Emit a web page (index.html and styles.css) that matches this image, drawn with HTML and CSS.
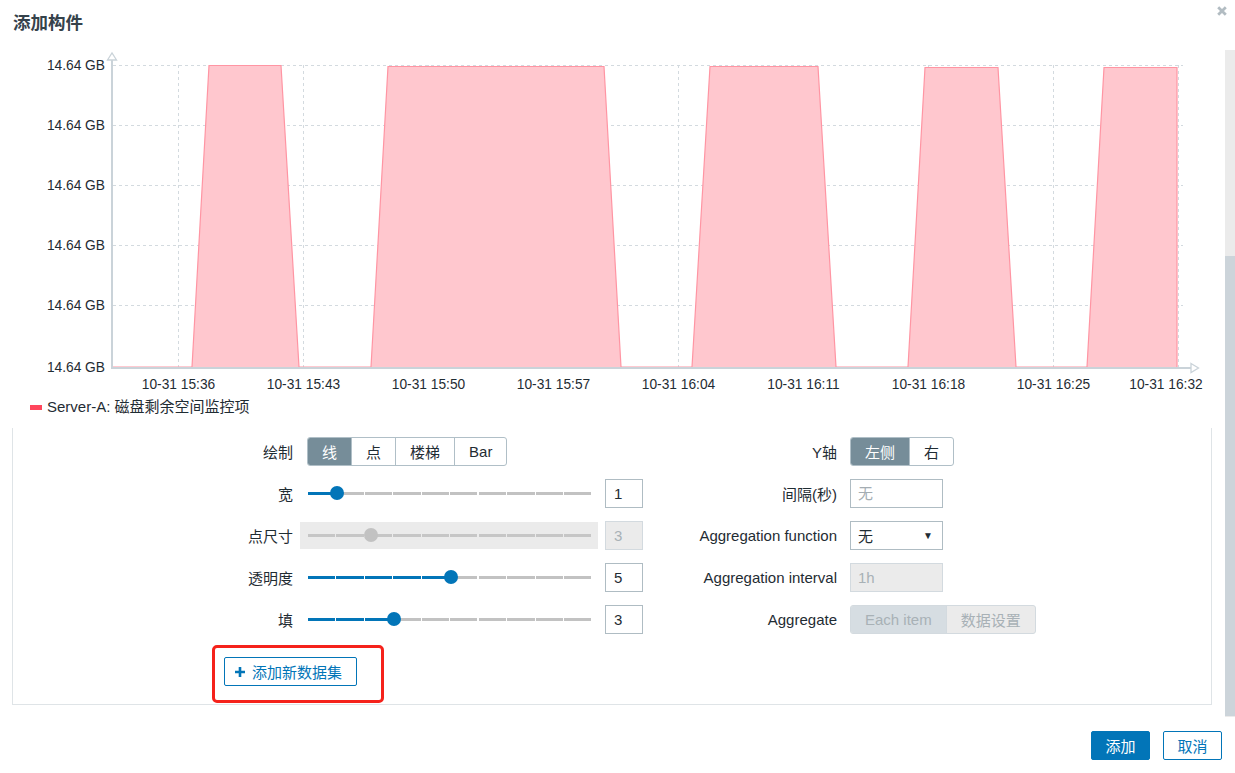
FILE: index.html
```html
<!DOCTYPE html>
<html lang="zh">
<head>
<meta charset="utf-8">
<title>添加构件</title>
<link rel="stylesheet" href="styles.css">
</head>
<body>
<div class="dialog">
  <header class="dlg-head">
    <h1 class="dlg-title">添加构件</h1>
    <button class="dlg-close" aria-label="关闭">
      <svg width="10" height="10" viewBox="0 0 10 10"><path d="M1.2 1.2 L8.8 8.8 M8.8 1.2 L1.2 8.8" stroke="#b2bcc2" stroke-width="2.8" stroke-linecap="butt"/></svg>
    </button>
  </header>

  <div class="dlg-body">
    <div class="scroll-area">
      <svg class="chart" viewBox="0 48 1225 350" width="1225" height="350">
        <g class="grid">
          <line x1="113" y1="65.5" x2="1183" y2="65.5"/>
          <line x1="113" y1="125.5" x2="1183" y2="125.5"/>
          <line x1="113" y1="185.5" x2="1183" y2="185.5"/>
          <line x1="113" y1="245.5" x2="1183" y2="245.5"/>
          <line x1="113" y1="305.5" x2="1183" y2="305.5"/>
          <line x1="178.5" y1="65" x2="178.5" y2="367"/>
          <line x1="303.5" y1="65" x2="303.5" y2="367"/>
          <line x1="428.5" y1="65" x2="428.5" y2="367"/>
          <line x1="553.5" y1="65" x2="553.5" y2="367"/>
          <line x1="678.5" y1="65" x2="678.5" y2="367"/>
          <line x1="803.5" y1="65" x2="803.5" y2="367"/>
          <line x1="928.5" y1="65" x2="928.5" y2="367"/>
          <line x1="1053.5" y1="65" x2="1053.5" y2="367"/>
          <line x1="1178.5" y1="65" x2="1178.5" y2="367"/>
        </g>
        <polygon class="area" points="113,367 192,367 209,65.5 281,65.5 299,367 371,367 388,66.5 604,66.5 621,367 692,367 710,66.5 818,66.5 836,367 908,367 925,67.5 998,67.5 1016,367 1087,367 1104,67.5 1177,67.5 1177,367"/>
        <polyline class="series" points="113,367 192,367 209,65.5 281,65.5 299,367 371,367 388,66.5 604,66.5 621,367 692,367 710,66.5 818,66.5 836,367 908,367 925,67.5 998,67.5 1016,367 1087,367 1104,67.5 1177,67.5 1177,367"/>
        <g class="axis">
          <line x1="112" y1="58" x2="112" y2="369"/>
          <line x1="111" y1="368" x2="1192" y2="368"/>
          <polygon points="107.5,60 112,53 116.5,60"/>
          <polygon points="1191,363.5 1198.5,368 1191,372.5"/>
        </g>
        <g class="ylabels">
          <text x="105" y="70">14.64 GB</text>
          <text x="105" y="130">14.64 GB</text>
          <text x="105" y="190">14.64 GB</text>
          <text x="105" y="250">14.64 GB</text>
          <text x="105" y="310">14.64 GB</text>
          <text x="105" y="372">14.64 GB</text>
        </g>
        <g class="xlabels">
          <text x="178.5" y="389">10-31 15:36</text>
          <text x="303.5" y="389">10-31 15:43</text>
          <text x="428.5" y="389">10-31 15:50</text>
          <text x="553.5" y="389">10-31 15:57</text>
          <text x="678.5" y="389">10-31 16:04</text>
          <text x="803.5" y="389">10-31 16:11</text>
          <text x="928.5" y="389">10-31 16:18</text>
          <text x="1053.5" y="389">10-31 16:25</text>
          <text x="1166" y="389">10-31 16:32</text>
        </g>
      </svg>

      <div class="legend"><span class="legend-swatch"></span><span>Server-A: 磁盘剩余空间监控项</span></div>

      <div class="panel">
        <div class="form-row">
          <label class="lbl">绘制</label>
          <div class="ctl">
            <div class="seg">
              <span class="seg-btn on">线</span><span class="seg-btn">点</span><span class="seg-btn">楼梯</span><span class="seg-btn">Bar</span>
            </div>
          </div>
          <label class="lbl lbl-r">Y轴</label>
          <div class="ctl">
            <div class="seg">
              <span class="seg-btn on">左侧</span><span class="seg-btn">右</span>
            </div>
          </div>
        </div>

        <div class="form-row">
          <label class="lbl">宽</label>
          <div class="ctl slider-ctl">
            <div class="slider"><div class="track" style="--pct:10%"><span class="thumb"></span></div></div>
            <input class="num" type="text" value="1">
          </div>
          <label class="lbl lbl-r">间隔(秒)</label>
          <div class="ctl"><input class="field" type="text" placeholder="无"></div>
        </div>

        <div class="form-row">
          <label class="lbl">点尺寸</label>
          <div class="ctl slider-ctl">
            <div class="slider is-disabled"><div class="track" style="--pct:22.2%"><span class="thumb"></span></div></div>
            <input class="num" type="text" value="3" disabled>
          </div>
          <label class="lbl lbl-r">Aggregation function</label>
          <div class="ctl"><div class="select"><span>无</span><span class="caret">▼</span></div></div>
        </div>

        <div class="form-row">
          <label class="lbl">透明度</label>
          <div class="ctl slider-ctl">
            <div class="slider"><div class="track" style="--pct:50%"><span class="thumb"></span></div></div>
            <input class="num" type="text" value="5">
          </div>
          <label class="lbl lbl-r">Aggregation interval</label>
          <div class="ctl"><input class="field" type="text" value="1h" disabled></div>
        </div>

        <div class="form-row">
          <label class="lbl">填</label>
          <div class="ctl slider-ctl">
            <div class="slider"><div class="track" style="--pct:30%"><span class="thumb"></span></div></div>
            <input class="num" type="text" value="3">
          </div>
          <label class="lbl lbl-r">Aggregate</label>
          <div class="ctl">
            <div class="seg seg-disabled">
              <span class="seg-btn on">Each item</span><span class="seg-btn">数据设置</span>
            </div>
          </div>
        </div>

        <div class="btn-row">
          <button class="btn-outline btn-add-ds">
            <svg width="10" height="10" viewBox="0 0 10 10"><path d="M3.7 0h2.6v3.7H10v2.6H6.3V10H3.7V6.3H0V3.7h3.7z" fill="#0275b8"/></svg>
            <span>添加新数据集</span>
          </button>
          <span class="highlight"></span>
        </div>
      </div>
    </div>
    <div class="scrollbar"><div class="scroll-thumb"></div></div>
  </div>

  <footer class="dlg-foot">
    <button class="btn-primary">添加</button>
    <button class="btn-outline btn-cancel">取消</button>
  </footer>
</div>
</body>
</html>
```

FILE: styles.css
```css
* { box-sizing: border-box; }

html, body {
  margin: 0;
  padding: 0;
}

body {
  width: 1235px;
  height: 773px;
  overflow: hidden;
  background: #ffffff;
  font-family: "Liberation Sans", "Noto Sans CJK SC", sans-serif;
  font-size: 15px;
  color: #1f2c33;
}

.dialog {
  width: 1235px;
  height: 773px;
  display: flex;
  flex-direction: column;
}

/* header */
.dlg-head {
  position: relative;
  flex: none;
  height: 48px;
  padding-left: 13px;
  display: flex;
  align-items: center;
}

.dlg-title {
  margin: 0;
  font-size: 17.5px;
  font-weight: bold;
  color: #35424b;
  line-height: 1;
}

.dlg-close {
  position: absolute;
  top: 6px;
  right: 8px;
  width: 10px;
  height: 10px;
  padding: 0;
  border: 0;
  background: none;
  display: block;
}
.dlg-close svg { display: block; }

/* body */
.dlg-body {
  flex: none;
  height: 672px;
  display: flex;
}

.scroll-area {
  width: 1225px;
  flex: none;
  overflow: hidden;
}

.scrollbar {
  width: 10px;
  flex: none;
  margin-top: 2px;
  height: 667px;
  background: #ebebeb;
}
.scroll-thumb {
  margin-top: 206px;
  height: 460px;
  background: #ccd4da;
}

/* chart */
.chart {
  display: block;
  width: 1225px;
  height: 350px;
}
.chart .grid line {
  stroke: #d3dadf;
  stroke-width: 1;
  stroke-dasharray: 3 3;
}
.chart .area {
  fill: #ffc7ce;
  stroke: none;
}
.chart .series {
  fill: none;
  stroke: #ff95a3;
  stroke-width: 1.2;
}
.chart .axis line {
  stroke: #cad3d9;
  stroke-width: 2;
}
.chart .axis polygon {
  fill: #ffffff;
  stroke: #cad3d9;
  stroke-width: 1.3;
}
.chart text {
  font-family: "Liberation Sans", sans-serif;
  font-size: 13.75px;
  fill: #1f2c33;
}
.chart .ylabels text { text-anchor: end; }
.chart .xlabels text { text-anchor: middle; }

/* legend */
.legend {
  display: flex;
  align-items: center;
  gap: 5px;
  height: 18px;
  padding-left: 30px;
  font-size: 15px;
  line-height: 18px;
}
.legend-swatch {
  width: 12px;
  height: 5px;
  background: #ff465c;
  flex: none;
}

/* form panel */
.panel {
  margin: 12px 13px 0 12px;
  border: 1px solid #dfe4e7;
  border-top: 0;
  padding-top: 2px;
}

.form-row {
  display: grid;
  grid-template-columns: 294px 336px 207px 1fr;
  align-items: center;
  height: 42px;
}

.lbl {
  text-align: right;
  padding-right: 14px;
  white-space: nowrap;
}
.lbl-r { padding-right: 13px; }

.ctl {
  display: flex;
  align-items: center;
}

/* segmented */
.seg {
  display: inline-flex;
  height: 29px;
  border: 1px solid #b0bfc7;
  border-radius: 3px;
  overflow: hidden;
  background: #ffffff;
}
.seg-btn {
  display: flex;
  align-items: center;
  padding: 0 14px;
  border-left: 1px solid #b0bfc7;
  white-space: nowrap;
}
.seg-btn:first-child { border-left: 0; }
.seg-btn.on {
  background: #768d99;
  color: #ffffff;
}
.seg-disabled {
  border-color: #d3dadf;
  background: #ebebeb;
  color: #a8b1b6;
}
.seg-disabled .seg-btn { border-left-color: #d3dadf; padding: 0 14px; }
.seg-disabled .seg-btn.on {
  background: #d6dde2;
  color: #a8b1b6;
}

/* slider */
.slider-ctl { gap: 7px; }

.slider {
  width: 298px;
  height: 27px;
  margin-left: -7px;
  padding: 0 5px 0 8px;
  display: flex;
  align-items: center;
  --gap: #ffffff;
}
.slider.is-disabled {
  background: #ebebeb;
  --gap: #ebebeb;
}
.track {
  position: relative;
  flex: 1;
  height: 3px;
  background:
    repeating-linear-gradient(to right, transparent 0 27px, var(--gap) 27px 28.5px),
    linear-gradient(to right, #0275b8 0 var(--pct), #c2c2c2 var(--pct) 100%);
}
.is-disabled .track {
  background:
    repeating-linear-gradient(to right, transparent 0 27px, var(--gap) 27px 28.5px),
    #c6c6c6;
}
.thumb {
  position: absolute;
  top: 50%;
  left: var(--pct);
  width: 14px;
  height: 14px;
  border-radius: 50%;
  background: #0275b8;
  transform: translate(-50%, -50%);
}
.is-disabled .thumb { background: #c2c2c2; }

/* inputs */
.num,
.field {
  height: 29px;
  border: 1px solid #afbcc3;
  border-radius: 0;
  background: #ffffff;
  font-family: inherit;
  font-size: 15px;
  color: #1f2c33;
  margin: 0;
  outline: none;
}
.num {
  width: 38px;
  padding: 0 0 0 8px;
}
.field {
  width: 93px;
  padding: 0 0 0 7px;
}
.field::placeholder { color: #a4adb3; opacity: 1; }
.num:disabled,
.field:disabled {
  background: #ebebeb;
  border-color: #d3dadf;
  color: #a8b1b6;
}

.select {
  width: 93px;
  height: 29px;
  border: 1px solid #afbcc3;
  padding: 0 9px 0 7px;
  display: flex;
  align-items: center;
  justify-content: space-between;
  background: #ffffff;
}
.caret {
  font-size: 10px;
  color: #1f2c33;
}

/* add dataset */
.btn-row {
  position: relative;
  padding: 17px 0 18px 211px;
  height: 64px;
}

.btn-outline {
  height: 29px;
  border: 1px solid #0275b8;
  border-radius: 2px;
  background: #ffffff;
  color: #0275b8;
  font-family: inherit;
  font-size: 15px;
  margin: 0;
}

.btn-add-ds {
  display: inline-flex;
  align-items: center;
  gap: 7px;
  padding: 0 14px 0 10px;
}
.btn-add-ds svg { display: block; flex: none; }

.highlight {
  position: absolute;
  left: 199px;
  top: 5px;
  width: 172px;
  height: 58px;
  border: 3px solid #f5221b;
  border-radius: 5px;
}

/* footer */
.dlg-foot {
  flex: none;
  display: flex;
  justify-content: flex-end;
  gap: 13px;
  padding: 11px 13px 0 0;
}

.btn-primary {
  width: 59px;
  height: 29px;
  border: 1px solid #0275b8;
  border-radius: 2px;
  background: #0275b8;
  color: #ffffff;
  font-family: inherit;
  font-size: 15px;
  margin: 0;
  padding: 0;
}
.btn-cancel {
  width: 59px;
  padding: 0;
}
```
